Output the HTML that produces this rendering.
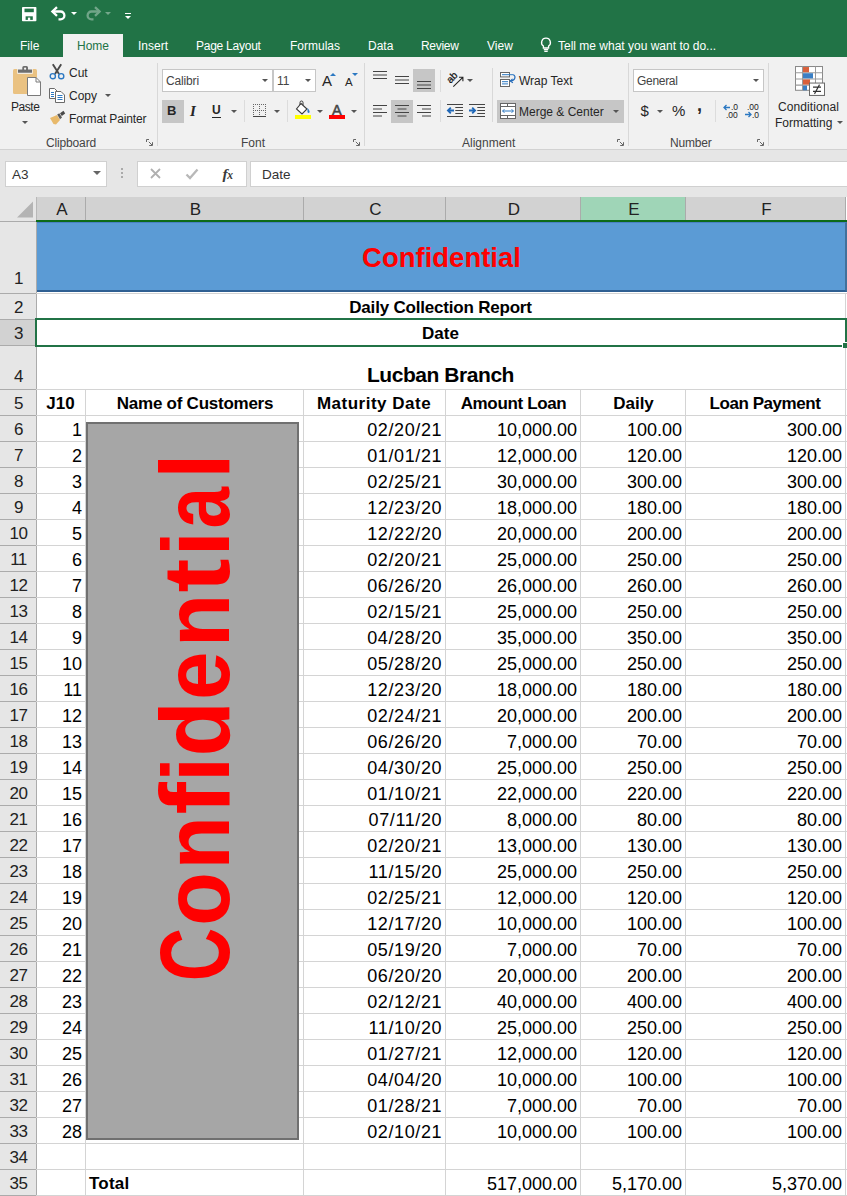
<!DOCTYPE html>
<html><head><meta charset="utf-8"><title>Excel</title>
<style>
*{box-sizing:border-box;margin:0;padding:0}
html,body{width:847px;height:1196px;overflow:hidden;background:#fff;font-family:"Liberation Sans",sans-serif;color:#000}
body{position:relative}
#top{position:absolute;left:0;top:0;width:847px;height:197px;background:#e6e6e6}
#green{position:absolute;left:0;top:0;width:847px;height:57px;background:#217346}
#ribbon{position:absolute;left:0;top:57px;width:847px;height:93px;background:#f1f1f1;border-bottom:1px solid #d2d2d2}
.tab{position:absolute;top:34px;height:23px;line-height:25px;font-size:12px;color:#fff;white-space:nowrap}
.tab.home{background:#f1f1f1;color:#217346;left:63px;width:60px;text-align:center}
.rl{position:absolute;font-size:12px;color:#262626;white-space:nowrap;line-height:14px}
.gl{position:absolute;font-size:12px;color:#444;white-space:nowrap;line-height:14px;top:79px}
.sep{position:absolute;top:6px;width:1px;height:83px;background:#d8d8d8}
.dd{position:absolute;background:#fff;border:1px solid #c6c6c6;height:23px;font-size:12px;line-height:22px;padding-left:3px;color:#444;letter-spacing:-0.15px}
.arr{position:absolute;width:0;height:0;border-left:3px solid transparent;border-right:3px solid transparent;border-top:3px solid #555}
#fbar .box{position:absolute;top:161px;height:26px;background:#fff;border:1px solid #d0d0d0}
#grid{position:absolute;left:0;top:0;width:847px;height:1196px}
.corner{position:absolute;left:0;top:197px;width:37px;height:24px;background:#e6e6e6;border-right:1px solid #b8b8b8}
.ch{position:absolute;top:197px;height:23px;background:#d2d2d2;border-right:1px solid #ababab;text-align:center;font-size:17px;line-height:25px;color:#222;padding-left:2px}
.ch.hov{background:#9fd5b7}
.chline{position:absolute;left:36px;top:220px;width:811px;height:2px;background:#0d6a18}
.rh{position:absolute;left:0;width:37px;background:#e6e6e6;border-bottom:1px solid #ababab;border-right:1px solid #ababab;text-align:center;font-size:17px;color:#222}
.rh span{position:absolute;left:0;width:36px;bottom:0px;line-height:22px;letter-spacing:-0.5px;padding-left:1px}
.rh.sel{background:#d2d2d2}
.hl{position:absolute;left:36px;width:811px;height:1px;background:#d4d4d4}
.vl{position:absolute;width:1px;background:#d4d4d4}
.blue{position:absolute;left:37px;top:222px;width:810px;height:70px;background:#5b9bd5;border-bottom:2px solid #2f5f92;border-right:2px solid #41719c;border-top:1px solid #4b80c4;text-align:center}
.blue span{position:absolute;left:-1px;width:811px;top:17.5px;font-size:27.5px;letter-spacing:0px;font-weight:bold;color:#ff0000;line-height:34px}
.t{position:absolute;height:26px;line-height:31px;font-size:18px;white-space:nowrap;color:#000}
.t.r{text-align:right;padding-right:3px}
.t.b{font-weight:bold;font-size:17px;line-height:29px}
.t.ctr{text-align:center}
.t.big{font-size:21px;line-height:57px;letter-spacing:-0.45px}
.selbox{position:absolute;left:35px;top:318px;width:812px;height:29px;border:2px solid #217346;background:#fff}
.selh{position:absolute;left:842px;top:342px;width:5px;height:6px;background:#217346;border-top:1px solid #fff;border-left:1px solid #fff}
.gbox{position:absolute;left:86px;top:422px;width:213px;height:718px;background:#a6a6a6;border:2px solid #707070}
.vt{position:absolute;left:0;top:0;transform-origin:0 0;transform:translate(145.5px,982.5px) rotate(-90deg) scaleX(0.925);font-size:99px;font-weight:bold;color:#ff0000;line-height:99px;white-space:nowrap}
.ic{position:absolute;display:block;overflow:visible}
.arr.w{border-top-color:#fff}
.arr.up{border-top:none;border-bottom:3.5px solid #2b78c2;border-left-width:3px;border-right-width:3px}
.arr.dnb{border-top:3.5px solid #2b78c2;border-left-width:3px;border-right-width:3px}
.msep{position:absolute;width:1px;height:22px;background:#dcdcdc}
.btnsel{position:absolute;background:#c6c6c6}
.t.d{letter-spacing:0.6px;padding-right:2.9px}

</style></head>
<body>
<div id="top">
<div id="green"></div>
<!-- quick access toolbar -->
<svg class="ic" style="left:21.6px;top:6.6px" width="15" height="15" viewBox="0 0 15 15"><rect x="0" y="0" width="14.4" height="14.2" rx="0.8" fill="#fff"/><rect x="2.5" y="1.6" width="9.3" height="3.6" fill="#217346"/><rect x="3.6" y="9.3" width="7.2" height="3.6" fill="#217346"/><rect x="5.9" y="10.6" width="2.3" height="2.4" fill="#fff"/></svg>
<svg class="ic" style="left:50px;top:5px" width="17" height="16" viewBox="0 0 17 16"><path d="M2 6.5 H10.5 A3.9 3.9 0 0 1 10.5 14.3 H8.5" fill="none" stroke="#fff" stroke-width="2.3"/><path d="M7 2.2 L2.4 6.5 L7 10.8" fill="none" stroke="#fff" stroke-width="2.3"/></svg>
<div class="arr w" style="left:70.5px;top:12px"></div>
<svg class="ic" style="left:85px;top:5px;opacity:.36" width="17" height="16" viewBox="0 0 17 16"><path d="M15 6.5 H6.5 A3.9 3.9 0 0 0 6.5 14.3 H8.5" fill="none" stroke="#fff" stroke-width="2.3"/><path d="M10 2.2 L14.6 6.5 L10 10.8" fill="none" stroke="#fff" stroke-width="2.3"/></svg>
<div class="arr w" style="left:105px;top:12px;opacity:.38"></div>
<div style="position:absolute;left:125px;top:13px;width:6px;height:1px;background:#fff"></div>
<div class="arr w" style="left:125px;top:15.5px;border-left-width:3px;border-right-width:3px;border-top-width:3.5px"></div>
<!-- tabs -->
<div class="tab" style="left:20px">File</div>
<div class="tab home">Home</div>
<div class="tab" style="left:138px">Insert</div>
<div class="tab" style="left:196px;letter-spacing:-0.25px">Page Layout</div>
<div class="tab" style="left:290px">Formulas</div>
<div class="tab" style="left:368px">Data</div>
<div class="tab" style="left:421px;letter-spacing:-0.3px">Review</div>
<div class="tab" style="left:487px">View</div>
<svg class="ic" style="left:540px;top:37px" width="12" height="16" viewBox="0 0 12 16"><path d="M6 1.2 A4.3 4.3 0 0 1 8.6 9 V11 H3.4 V9 A4.3 4.3 0 0 1 6 1.2 Z" fill="none" stroke="#fff" stroke-width="1.35"/><path d="M3.8 12.7 H8.2 M4.3 14.4 H7.7" stroke="#fff" stroke-width="1.3"/></svg>
<div class="tab" style="left:558px">Tell me what you want to do...</div>
<div id="ribbon">
<!-- separators -->
<div class="sep" style="left:157px"></div>
<div class="sep" style="left:364px"></div>
<div class="sep" style="left:628px"></div>
<div class="sep" style="left:768px"></div>
<div class="sep" style="left:492px;top:11px;height:54px"></div>
<div class="msep" style="left:244px;top:43px"></div>
<div class="msep" style="left:287px;top:43px"></div>
<div class="msep" style="left:440px;top:13px"></div>
<div class="msep" style="left:440px;top:43px"></div>
<div class="msep" style="left:715px;top:43px"></div>
<!-- Clipboard -->
<svg class="ic" style="left:12px;top:8px" width="30" height="31" viewBox="0 0 30 31"><rect x="1" y="4" width="24" height="25" rx="1.5" fill="#eac282"/><rect x="5.3" y="3.6" width="15.4" height="5.2" fill="#f6f6f6"/><path d="M6 4.6 H10.3 V2.6 A1.5 1.5 0 0 1 11.8 1.1 H14.5 A1.5 1.5 0 0 1 16 2.6 V4.6 H20 V7.7 H6 Z" fill="#6e6e6e"/><circle cx="13.1" cy="3.7" r="1.1" fill="#f6f6f6"/><path d="M15.5 12.5 H24 L28.5 17 V30.5 H15.5 Z" fill="#fff" stroke="#7a7a7a" stroke-width="1"/><path d="M24 12.5 V17 H28.5" fill="none" stroke="#7a7a7a" stroke-width="1"/></svg>
<div class="rl" style="left:11px;top:43px;letter-spacing:-0.45px">Paste</div>
<div class="arr" style="left:22px;top:64px"></div>
<svg class="ic" style="left:49px;top:7px" width="16" height="16" viewBox="0 0 16 16"><path d="M3.8 0.3 L10 10 M12.2 0.3 L6 10" stroke="#4a4a4a" stroke-width="1.9" fill="none"/><circle cx="3.8" cy="12.2" r="2.6" fill="none" stroke="#2b78c2" stroke-width="1.4"/><circle cx="12.2" cy="12.2" r="2.6" fill="none" stroke="#2b78c2" stroke-width="1.4"/></svg>
<div class="rl" style="left:69px;top:9px">Cut</div>
<svg class="ic" style="left:49px;top:31px" width="16" height="15" viewBox="0 0 16 15"><path d="M0.5 0.5 H5.5 L8.5 3.5 V10.5 H0.5 Z" fill="#fff" stroke="#6a6a6a"/><path d="M2 4.5 H5 M2 6.5 H5 M2 8.5 H5" stroke="#2b78c2" stroke-width="1"/><path d="M6.5 3.5 H12 L15.5 7 V14.5 H6.5 Z" fill="#fff" stroke="#6a6a6a"/><path d="M8.5 7.5 H13.5 M8.5 9.5 H13.5 M8.5 11.5 H13.5" stroke="#2b78c2" stroke-width="1"/></svg>
<div class="rl" style="left:69px;top:32px">Copy</div>
<div class="arr" style="left:105px;top:37px"></div>
<svg class="ic" style="left:49px;top:53px" width="17" height="15" viewBox="0 0 17 15"><path d="M1 8 L8 5 L11 10 L7 14.5 L4.5 14 Z" fill="#e8b96a"/><path d="M8.2 4.6 L10.3 3.2 L13 7.6 L11 9.2 Z" fill="#5a5a5a"/><path d="M11 3.2 L14.5 0.8 L16.2 3.5 L12.8 6 Z" fill="#4a4a4a"/></svg>
<div class="rl" style="left:69px;top:55px;letter-spacing:-0.15px">Format Painter</div>
<div class="gl" style="left:46px;letter-spacing:-0.15px">Clipboard</div>
<svg class="ic lch" style="left:146px;top:82px" width="7" height="7" viewBox="0 0 7 7"><path d="M0.5 3 V0.5 H3 M2.8 2.8 L6 6 M6.5 3.2 V6.5 H3.2" fill="none" stroke="#666" stroke-width="1"/></svg>
<!-- Font -->
<div class="dd" style="left:162px;top:12px;width:111px">Calibri</div>
<div class="arr" style="left:262px;top:22px"></div>
<div class="dd" style="left:273px;top:12px;width:43px">11</div>
<div class="arr" style="left:305px;top:22px"></div>
<div class="rl" style="left:322px;top:16px;font-size:15px;line-height:15px">A</div>
<div class="arr up" style="left:329.5px;top:15.5px"></div>
<div class="rl" style="left:345px;top:19px;font-size:11.5px;line-height:12px">A</div>
<div class="arr dnb" style="left:351.5px;top:15.5px"></div>
<div class="btnsel" style="left:162px;top:43px;width:22px;height:23px"></div>
<div class="rl" style="left:167px;top:47px;font-weight:bold;font-size:13px">B</div>
<div class="rl" style="left:190px;top:47px;font-style:italic;font-size:15px;font-family:'Liberation Serif',serif;font-weight:bold">I</div>
<div class="rl" style="left:212px;top:47px;font-weight:bold;font-size:12px;border-bottom:1px solid #262626;line-height:13px">U</div>
<div class="arr" style="left:231px;top:53px"></div>
<svg class="ic" style="left:253px;top:47px" width="14" height="14" viewBox="0 0 14 14"><g fill="#666"><rect x="0" y="0" width="1" height="1"/><rect x="0" y="6" width="1" height="1"/><rect x="2" y="0" width="1" height="1"/><rect x="2" y="6" width="1" height="1"/><rect x="4" y="0" width="1" height="1"/><rect x="4" y="6" width="1" height="1"/><rect x="6" y="0" width="1" height="1"/><rect x="6" y="6" width="1" height="1"/><rect x="8" y="0" width="1" height="1"/><rect x="8" y="6" width="1" height="1"/><rect x="10" y="0" width="1" height="1"/><rect x="10" y="6" width="1" height="1"/><rect x="12" y="0" width="1" height="1"/><rect x="12" y="6" width="1" height="1"/><rect x="0" y="2" width="1" height="1"/><rect x="6" y="2" width="1" height="1"/><rect x="12" y="2" width="1" height="1"/><rect x="0" y="4" width="1" height="1"/><rect x="6" y="4" width="1" height="1"/><rect x="12" y="4" width="1" height="1"/><rect x="0" y="8" width="1" height="1"/><rect x="6" y="8" width="1" height="1"/><rect x="12" y="8" width="1" height="1"/><rect x="0" y="10" width="1" height="1"/><rect x="6" y="10" width="1" height="1"/><rect x="12" y="10" width="1" height="1"/></g><rect x="0" y="12" width="13" height="1" fill="#444"/></svg>
<div class="arr" style="left:274px;top:53px"></div>
<svg class="ic" style="left:295px;top:44px" width="17" height="14" viewBox="0 0 17 14"><path d="M6 2.5 L12 8 L7 13 L1.5 8 Z" fill="#fff" stroke="#3a3a3a" stroke-width="1.1"/><path d="M5 4 V1.5 A1.5 1.5 0 0 1 8 1.5 V4" fill="none" stroke="#3a3a3a" stroke-width="1"/><path d="M12.5 7 C14 9 15 10 14.5 11.5 C13.5 12.5 12 11.5 12.5 10 Z" fill="#2b78c2"/></svg>
<div style="position:absolute;left:295px;top:58px;width:16px;height:4px;background:#ffff00"></div>
<div class="arr" style="left:317px;top:53px"></div>
<div class="rl" style="left:332px;top:45px;font-size:14.5px;line-height:16px;color:#444;-webkit-text-stroke:0.5px #444">A</div>
<div style="position:absolute;left:329px;top:58px;width:16px;height:4px;background:#ff0000"></div>
<div class="arr" style="left:351px;top:53px"></div>
<div class="gl" style="left:241px">Font</div>
<svg class="ic lch" style="left:353px;top:82px" width="7" height="7" viewBox="0 0 7 7"><path d="M0.5 3 V0.5 H3 M2.8 2.8 L6 6 M6.5 3.2 V6.5 H3.2" fill="none" stroke="#666" stroke-width="1"/></svg>
<!-- Alignment -->
<div class="btnsel" style="left:413px;top:12px;width:22px;height:23px"></div>
<div class="btnsel" style="left:391px;top:43px;width:22px;height:23px"></div>
<div class="btnsel" style="left:497px;top:43px;width:127px;height:23px"></div>
<svg class="ic" style="left:373px;top:14px" width="14" height="9" viewBox="0 0 14 9"><path d="M0 0.5 H14 M0 4 H14 M0 7.5 H14" stroke="#444" stroke-width="1"/></svg>
<svg class="ic" style="left:395px;top:19px" width="14" height="9" viewBox="0 0 14 9"><path d="M0 0.5 H14 M0 4 H14 M0 7.5 H14" stroke="#444" stroke-width="1"/></svg>
<svg class="ic" style="left:417px;top:24px" width="14" height="9" viewBox="0 0 14 9"><path d="M0 0.5 H14 M0 4 H14 M0 7.5 H14" stroke="#444" stroke-width="1"/></svg>
<svg class="ic" style="left:373px;top:48px" width="14" height="12" viewBox="0 0 14 12"><path d="M0 0.5 H14 M0 4 H9 M0 7.5 H14 M0 11 H9" stroke="#444" stroke-width="1"/></svg>
<svg class="ic" style="left:395px;top:48px" width="14" height="12" viewBox="0 0 14 12"><path d="M0 0.5 H14 M2.5 4 H11.5 M0 7.5 H14 M2.5 11 H11.5" stroke="#444" stroke-width="1"/></svg>
<svg class="ic" style="left:417px;top:48px" width="14" height="12" viewBox="0 0 14 12"><path d="M0 0.5 H14 M5 4 H14 M0 7.5 H14 M5 11 H14" stroke="#444" stroke-width="1"/></svg>
<svg class="ic" style="left:447px;top:15px" width="17" height="16" viewBox="0 0 17 16"><text x="5.2" y="5.6" text-anchor="middle" font-size="10" font-family="Liberation Sans" fill="#111" stroke="#111" stroke-width="0.25" transform="rotate(-45 5.2 5.6)" dy="3">ab</text><path d="M6.3 14.6 L15.6 5.6 M12 5.3 H15.9 V9.2" fill="none" stroke="#222" stroke-width="1.1"/></svg>
<div class="arr" style="left:467px;top:22px"></div>
<svg class="ic" style="left:447px;top:47px" width="17" height="13" viewBox="0 0 17 13"><path d="M0 0.5 H16 M8.3 3.5 H16 M8.3 6.5 H16 M8.3 9.5 H16 M0 12.5 H16" stroke="#444" stroke-width="1"/><path d="M0.8 6.5 H7 M3.8 3.6 L0.9 6.5 L3.8 9.4" fill="none" stroke="#2068b8" stroke-width="1.8"/></svg>
<svg class="ic" style="left:469px;top:47px" width="17" height="13" viewBox="0 0 17 13"><path d="M0 0.5 H16 M8.3 3.5 H16 M8.3 6.5 H16 M8.3 9.5 H16 M0 12.5 H16" stroke="#444" stroke-width="1"/><path d="M0 6.5 H6.2 M3.2 3.6 L6.1 6.5 L3.2 9.4" fill="none" stroke="#2068b8" stroke-width="1.8"/></svg>
<svg class="ic" style="left:500px;top:14px" width="17" height="17" viewBox="0 0 17 17"><rect x="0.5" y="1.5" width="9" height="4.4" fill="#fff" stroke="#666"/><rect x="0.5" y="8.5" width="9" height="7" fill="#fff" stroke="#666"/><path d="M2 3.7 H13.6 M2 10.7 H8 M2 12.9 H8" stroke="#2b78c2" stroke-width="1"/><path d="M13.5 3.7 C16.3 5.5 15 9.8 10.4 10" fill="none" stroke="#2068b8" stroke-width="1.1"/><path d="M12.6 7.9 L10.2 10 L12.9 11.9" fill="none" stroke="#2068b8" stroke-width="1.1"/></svg>
<div class="rl" style="left:519px;top:17px">Wrap Text</div>
<svg class="ic" style="left:500px;top:46px" width="16" height="16" viewBox="0 0 16 16"><rect x="0.5" y="0.5" width="15" height="15" fill="#fff" stroke="#666"/><path d="M0.5 3.5 H15.5 M0.5 12.5 H15.5 M7.5 0.5 V3.5 M7.5 12.5 V15.5" stroke="#666" fill="none"/><path d="M2.6 8 H13.4 M4.4 6.2 L2.6 8 L4.4 9.8 M11.6 6.2 L13.4 8 L11.6 9.8" fill="none" stroke="#2b78c2" stroke-width="1"/></svg>
<div class="rl" style="left:519px;top:48px">Merge &amp; Center</div>
<div class="arr" style="left:613px;top:53px"></div>
<div class="gl" style="left:462px">Alignment</div>
<svg class="ic lch" style="left:617px;top:82px" width="7" height="7" viewBox="0 0 7 7"><path d="M0.5 3 V0.5 H3 M2.8 2.8 L6 6 M6.5 3.2 V6.5 H3.2" fill="none" stroke="#666" stroke-width="1"/></svg>
<!-- Number -->
<div class="dd" style="left:633px;top:12px;width:131px;letter-spacing:-0.3px">General</div>
<div class="arr" style="left:753px;top:22px"></div>
<div class="rl" style="left:640.5px;top:45px;font-size:15px;line-height:18px">$</div>
<div class="arr" style="left:657px;top:53px"></div>
<div class="rl" style="left:672px;top:45px;font-size:15px;line-height:18px">%</div>
<div class="rl" style="left:697px;top:39px;font-size:18px;line-height:18px;font-weight:bold">,</div>
<svg class="ic" style="left:723px;top:47px" width="16" height="14" viewBox="0 0 16 14"><path d="M1 3.5 H7 M3.5 1 L1 3.5 L3.5 6" fill="none" stroke="#2b78c2" stroke-width="1.3"/><text x="8" y="6" font-size="8.5" font-family="Liberation Sans" fill="#222">.0</text><text x="3" y="13.5" font-size="8.5" font-family="Liberation Sans" fill="#222">.00</text></svg>
<svg class="ic" style="left:744px;top:47px" width="16" height="14" viewBox="0 0 16 14"><text x="3" y="6" font-size="8.5" font-family="Liberation Sans" fill="#222">.00</text><path d="M1 10.5 H7 M4.5 8 L7 10.5 L4.5 13" fill="none" stroke="#2b78c2" stroke-width="1.3"/><text x="8" y="13.5" font-size="8.5" font-family="Liberation Sans" fill="#222">.0</text></svg>
<div class="gl" style="left:670px;letter-spacing:-0.2px">Number</div>
<svg class="ic lch" style="left:757px;top:82px" width="7" height="7" viewBox="0 0 7 7"><path d="M0.5 3 V0.5 H3 M2.8 2.8 L6 6 M6.5 3.2 V6.5 H3.2" fill="none" stroke="#666" stroke-width="1"/></svg>
<!-- Conditional Formatting -->
<svg class="ic" style="left:795px;top:9px" width="31" height="31" viewBox="0 0 31 30" preserveAspectRatio="none"><rect x="0.5" y="0.5" width="27" height="23" fill="#fff" stroke="#8a8a8a"/><path d="M0.5 6.5 H27.5 M0.5 12.5 H27.5 M0.5 18.5 H27.5 M7.5 0.5 V23.5 M20.5 0.5 V23.5" stroke="#9a9a9a" fill="none"/><rect x="8" y="1" width="6" height="5" fill="#d9603b"/><rect x="8" y="7" width="10" height="5" fill="#3b7fc4"/><rect x="8" y="13" width="7" height="5" fill="#d9603b"/><rect x="8" y="19" width="4" height="4.5" fill="#3b7fc4"/><rect x="14.5" y="16.5" width="15" height="12" fill="#fff" stroke="#6a6a6a"/><path d="M18 20.5 H26 M18 24.5 H26 M24.5 18 L19.5 27" stroke="#333" stroke-width="1.1" fill="none"/></svg>
<div class="rl" style="left:778px;top:43px;letter-spacing:0.1px">Conditional</div>
<div class="rl" style="left:775px;top:59px">Formatting</div>
<div class="arr" style="left:837px;top:64px"></div>
</div>
<!-- formula bar -->
<div id="fbar">
<div class="box" style="left:5px;width:102px"><span style="position:absolute;left:6px;top:0;line-height:26px;font-size:13.5px;color:#333">A3</span></div>
<div class="arr" style="left:93px;top:171px;border-top-color:#666;border-left-width:4px;border-right-width:4px;border-top-width:4px"></div>
<div style="position:absolute;left:121px;top:168px;width:2px;height:2px;background:#aaa;box-shadow:0 4px 0 #aaa,0 8px 0 #aaa"></div>
<div class="box" style="left:137px;width:110px"></div>
<svg class="ic" style="left:150px;top:168px" width="11" height="11" viewBox="0 0 11 11"><path d="M1 1 L10 10 M10 1 L1 10" stroke="#b0b0b0" stroke-width="1.8"/></svg>
<svg class="ic" style="left:185px;top:168px" width="14" height="11" viewBox="0 0 14 11"><path d="M1.5 6.5 L5 10 L12.5 1.5" fill="none" stroke="#b8b8b8" stroke-width="2.3"/></svg>
<div style="position:absolute;left:222.5px;top:164.5px;font-family:'Liberation Serif',serif;font-style:italic;font-weight:bold;font-size:15.5px;color:#3a3a3a;line-height:18px">f<span style="font-size:11.5px;margin-left:-0.5px">x</span></div>
<div class="box" style="left:250px;width:600px"><span style="position:absolute;left:11px;top:0;line-height:26px;font-size:13.5px;color:#333">Date</span></div>
</div>
</div>
<div id="grid">
<div class="corner"><svg width="36" height="24" viewBox="0 0 36 24"><path d="M33 4.5 L33 20.5 L17 20.5 Z" fill="#b4b4b4"/></svg></div>
<div class="ch" style="left:37px;width:49px"><span>A</span></div>
<div class="ch" style="left:86px;width:218px"><span>B</span></div>
<div class="ch" style="left:304px;width:142px"><span>C</span></div>
<div class="ch" style="left:446px;width:135px"><span>D</span></div>
<div class="ch hov" style="left:581px;width:105px"><span>E</span></div>
<div class="ch" style="left:686px;width:160px"><span>F</span></div>
<div class="chline"></div><div style="position:absolute;left:0;top:221px;width:36px;height:1px;background:#ababab"></div>
<div class="rh" style="top:222px;height:72px"><span style="bottom:3.5px">1</span></div>
<div class="rh" style="top:294px;height:26px"><span>2</span></div>
<div class="rh sel" style="top:320px;height:26px"><span>3</span></div>
<div class="rh" style="top:346px;height:44px"><span style="bottom:1.5px">4</span></div>
<div class="rh" style="top:390px;height:26px"><span>5</span></div>
<div class="rh" style="top:416px;height:26px"><span>6</span></div>
<div class="rh" style="top:442px;height:26px"><span>7</span></div>
<div class="rh" style="top:468px;height:26px"><span>8</span></div>
<div class="rh" style="top:494px;height:26px"><span>9</span></div>
<div class="rh" style="top:520px;height:26px"><span>10</span></div>
<div class="rh" style="top:546px;height:26px"><span>11</span></div>
<div class="rh" style="top:572px;height:26px"><span>12</span></div>
<div class="rh" style="top:598px;height:26px"><span>13</span></div>
<div class="rh" style="top:624px;height:26px"><span>14</span></div>
<div class="rh" style="top:650px;height:26px"><span>15</span></div>
<div class="rh" style="top:676px;height:26px"><span>16</span></div>
<div class="rh" style="top:702px;height:26px"><span>17</span></div>
<div class="rh" style="top:728px;height:26px"><span>18</span></div>
<div class="rh" style="top:754px;height:26px"><span>19</span></div>
<div class="rh" style="top:780px;height:26px"><span>20</span></div>
<div class="rh" style="top:806px;height:26px"><span>21</span></div>
<div class="rh" style="top:832px;height:26px"><span>22</span></div>
<div class="rh" style="top:858px;height:26px"><span>23</span></div>
<div class="rh" style="top:884px;height:26px"><span>24</span></div>
<div class="rh" style="top:910px;height:26px"><span>25</span></div>
<div class="rh" style="top:936px;height:26px"><span>26</span></div>
<div class="rh" style="top:962px;height:26px"><span>27</span></div>
<div class="rh" style="top:988px;height:26px"><span>28</span></div>
<div class="rh" style="top:1014px;height:26px"><span>29</span></div>
<div class="rh" style="top:1040px;height:26px"><span>30</span></div>
<div class="rh" style="top:1066px;height:26px"><span>31</span></div>
<div class="rh" style="top:1092px;height:26px"><span>32</span></div>
<div class="rh" style="top:1118px;height:26px"><span>33</span></div>
<div class="rh" style="top:1144px;height:26px"><span>34</span></div>
<div class="rh" style="top:1170px;height:26px"><span>35</span></div>
<div class="hl" style="top:293px"></div>
<div class="hl" style="top:389px"></div>
<div class="hl" style="top:415px"></div>
<div class="hl" style="top:441px"></div>
<div class="hl" style="top:467px"></div>
<div class="hl" style="top:493px"></div>
<div class="hl" style="top:519px"></div>
<div class="hl" style="top:545px"></div>
<div class="hl" style="top:571px"></div>
<div class="hl" style="top:597px"></div>
<div class="hl" style="top:623px"></div>
<div class="hl" style="top:649px"></div>
<div class="hl" style="top:675px"></div>
<div class="hl" style="top:701px"></div>
<div class="hl" style="top:727px"></div>
<div class="hl" style="top:753px"></div>
<div class="hl" style="top:779px"></div>
<div class="hl" style="top:805px"></div>
<div class="hl" style="top:831px"></div>
<div class="hl" style="top:857px"></div>
<div class="hl" style="top:883px"></div>
<div class="hl" style="top:909px"></div>
<div class="hl" style="top:935px"></div>
<div class="hl" style="top:961px"></div>
<div class="hl" style="top:987px"></div>
<div class="hl" style="top:1013px"></div>
<div class="hl" style="top:1039px"></div>
<div class="hl" style="top:1065px"></div>
<div class="hl" style="top:1091px"></div>
<div class="hl" style="top:1117px"></div>
<div class="hl" style="top:1143px"></div>
<div class="hl" style="top:1169px"></div>
<div class="hl" style="top:1195px"></div>
<div class="vl" style="left:85px;top:389px;height:807px"></div>
<div class="vl" style="left:303px;top:389px;height:807px"></div>
<div class="vl" style="left:445px;top:389px;height:807px"></div>
<div class="vl" style="left:580px;top:389px;height:807px"></div>
<div class="vl" style="left:685px;top:389px;height:807px"></div>
<div class="vl" style="left:845px;top:389px;height:807px"></div>
<div class="vl" style="left:845px;top:293px;height:96px"></div>
<div class="blue"><span>Confidential</span></div>
<div class="t b ctr" style="top:293px;height:26px;left:36px;width:809px;letter-spacing:-0.2px">Daily Collection Report</div>
<div class="selbox"></div><div class="selh"></div>
<div class="t b ctr" style="top:319px;height:26px;left:36px;width:809px">Date</div>
<div class="t b ctr big" style="top:346px;height:43px;left:36px;width:809px">Lucban Branch</div>
<div class="t b ctr" style="top:389px;left:36px;width:49px;letter-spacing:0px">J10</div>
<div class="t b ctr" style="top:389px;left:86px;width:218px;letter-spacing:-0.25px">Name of Customers</div>
<div class="t b ctr" style="top:389px;left:303px;width:142px;letter-spacing:0.5px">Maturity Date</div>
<div class="t b ctr" style="top:389px;left:446px;width:135px;letter-spacing:-0.35px">Amount Loan</div>
<div class="t b ctr" style="top:389px;left:581px;width:105px;letter-spacing:0px">Daily</div>
<div class="t b ctr" style="top:389px;left:685px;width:160px;letter-spacing:-0.45px">Loan Payment</div>
<div class="t r" style="top:415px;left:36px;width:49px">1</div><div class="t r d" style="top:415px;left:303px;width:142px">02/20/21</div><div class="t r" style="top:415px;left:445px;width:135px">10,000.00</div><div class="t r" style="top:415px;left:580px;width:105px">100.00</div><div class="t r" style="top:415px;left:685px;width:160px">300.00</div>
<div class="t r" style="top:441px;left:36px;width:49px">2</div><div class="t r d" style="top:441px;left:303px;width:142px">01/01/21</div><div class="t r" style="top:441px;left:445px;width:135px">12,000.00</div><div class="t r" style="top:441px;left:580px;width:105px">120.00</div><div class="t r" style="top:441px;left:685px;width:160px">120.00</div>
<div class="t r" style="top:467px;left:36px;width:49px">3</div><div class="t r d" style="top:467px;left:303px;width:142px">02/25/21</div><div class="t r" style="top:467px;left:445px;width:135px">30,000.00</div><div class="t r" style="top:467px;left:580px;width:105px">300.00</div><div class="t r" style="top:467px;left:685px;width:160px">300.00</div>
<div class="t r" style="top:493px;left:36px;width:49px">4</div><div class="t r d" style="top:493px;left:303px;width:142px">12/23/20</div><div class="t r" style="top:493px;left:445px;width:135px">18,000.00</div><div class="t r" style="top:493px;left:580px;width:105px">180.00</div><div class="t r" style="top:493px;left:685px;width:160px">180.00</div>
<div class="t r" style="top:519px;left:36px;width:49px">5</div><div class="t r d" style="top:519px;left:303px;width:142px">12/22/20</div><div class="t r" style="top:519px;left:445px;width:135px">20,000.00</div><div class="t r" style="top:519px;left:580px;width:105px">200.00</div><div class="t r" style="top:519px;left:685px;width:160px">200.00</div>
<div class="t r" style="top:545px;left:36px;width:49px">6</div><div class="t r d" style="top:545px;left:303px;width:142px">02/20/21</div><div class="t r" style="top:545px;left:445px;width:135px">25,000.00</div><div class="t r" style="top:545px;left:580px;width:105px">250.00</div><div class="t r" style="top:545px;left:685px;width:160px">250.00</div>
<div class="t r" style="top:571px;left:36px;width:49px">7</div><div class="t r d" style="top:571px;left:303px;width:142px">06/26/20</div><div class="t r" style="top:571px;left:445px;width:135px">26,000.00</div><div class="t r" style="top:571px;left:580px;width:105px">260.00</div><div class="t r" style="top:571px;left:685px;width:160px">260.00</div>
<div class="t r" style="top:597px;left:36px;width:49px">8</div><div class="t r d" style="top:597px;left:303px;width:142px">02/15/21</div><div class="t r" style="top:597px;left:445px;width:135px">25,000.00</div><div class="t r" style="top:597px;left:580px;width:105px">250.00</div><div class="t r" style="top:597px;left:685px;width:160px">250.00</div>
<div class="t r" style="top:623px;left:36px;width:49px">9</div><div class="t r d" style="top:623px;left:303px;width:142px">04/28/20</div><div class="t r" style="top:623px;left:445px;width:135px">35,000.00</div><div class="t r" style="top:623px;left:580px;width:105px">350.00</div><div class="t r" style="top:623px;left:685px;width:160px">350.00</div>
<div class="t r" style="top:649px;left:36px;width:49px">10</div><div class="t r d" style="top:649px;left:303px;width:142px">05/28/20</div><div class="t r" style="top:649px;left:445px;width:135px">25,000.00</div><div class="t r" style="top:649px;left:580px;width:105px">250.00</div><div class="t r" style="top:649px;left:685px;width:160px">250.00</div>
<div class="t r" style="top:675px;left:36px;width:49px">11</div><div class="t r d" style="top:675px;left:303px;width:142px">12/23/20</div><div class="t r" style="top:675px;left:445px;width:135px">18,000.00</div><div class="t r" style="top:675px;left:580px;width:105px">180.00</div><div class="t r" style="top:675px;left:685px;width:160px">180.00</div>
<div class="t r" style="top:701px;left:36px;width:49px">12</div><div class="t r d" style="top:701px;left:303px;width:142px">02/24/21</div><div class="t r" style="top:701px;left:445px;width:135px">20,000.00</div><div class="t r" style="top:701px;left:580px;width:105px">200.00</div><div class="t r" style="top:701px;left:685px;width:160px">200.00</div>
<div class="t r" style="top:727px;left:36px;width:49px">13</div><div class="t r d" style="top:727px;left:303px;width:142px">06/26/20</div><div class="t r" style="top:727px;left:445px;width:135px">7,000.00</div><div class="t r" style="top:727px;left:580px;width:105px">70.00</div><div class="t r" style="top:727px;left:685px;width:160px">70.00</div>
<div class="t r" style="top:753px;left:36px;width:49px">14</div><div class="t r d" style="top:753px;left:303px;width:142px">04/30/20</div><div class="t r" style="top:753px;left:445px;width:135px">25,000.00</div><div class="t r" style="top:753px;left:580px;width:105px">250.00</div><div class="t r" style="top:753px;left:685px;width:160px">250.00</div>
<div class="t r" style="top:779px;left:36px;width:49px">15</div><div class="t r d" style="top:779px;left:303px;width:142px">01/10/21</div><div class="t r" style="top:779px;left:445px;width:135px">22,000.00</div><div class="t r" style="top:779px;left:580px;width:105px">220.00</div><div class="t r" style="top:779px;left:685px;width:160px">220.00</div>
<div class="t r" style="top:805px;left:36px;width:49px">16</div><div class="t r d" style="top:805px;left:303px;width:142px">07/11/20</div><div class="t r" style="top:805px;left:445px;width:135px">8,000.00</div><div class="t r" style="top:805px;left:580px;width:105px">80.00</div><div class="t r" style="top:805px;left:685px;width:160px">80.00</div>
<div class="t r" style="top:831px;left:36px;width:49px">17</div><div class="t r d" style="top:831px;left:303px;width:142px">02/20/21</div><div class="t r" style="top:831px;left:445px;width:135px">13,000.00</div><div class="t r" style="top:831px;left:580px;width:105px">130.00</div><div class="t r" style="top:831px;left:685px;width:160px">130.00</div>
<div class="t r" style="top:857px;left:36px;width:49px">18</div><div class="t r d" style="top:857px;left:303px;width:142px">11/15/20</div><div class="t r" style="top:857px;left:445px;width:135px">25,000.00</div><div class="t r" style="top:857px;left:580px;width:105px">250.00</div><div class="t r" style="top:857px;left:685px;width:160px">250.00</div>
<div class="t r" style="top:883px;left:36px;width:49px">19</div><div class="t r d" style="top:883px;left:303px;width:142px">02/25/21</div><div class="t r" style="top:883px;left:445px;width:135px">12,000.00</div><div class="t r" style="top:883px;left:580px;width:105px">120.00</div><div class="t r" style="top:883px;left:685px;width:160px">120.00</div>
<div class="t r" style="top:909px;left:36px;width:49px">20</div><div class="t r d" style="top:909px;left:303px;width:142px">12/17/20</div><div class="t r" style="top:909px;left:445px;width:135px">10,000.00</div><div class="t r" style="top:909px;left:580px;width:105px">100.00</div><div class="t r" style="top:909px;left:685px;width:160px">100.00</div>
<div class="t r" style="top:935px;left:36px;width:49px">21</div><div class="t r d" style="top:935px;left:303px;width:142px">05/19/20</div><div class="t r" style="top:935px;left:445px;width:135px">7,000.00</div><div class="t r" style="top:935px;left:580px;width:105px">70.00</div><div class="t r" style="top:935px;left:685px;width:160px">70.00</div>
<div class="t r" style="top:961px;left:36px;width:49px">22</div><div class="t r d" style="top:961px;left:303px;width:142px">06/20/20</div><div class="t r" style="top:961px;left:445px;width:135px">20,000.00</div><div class="t r" style="top:961px;left:580px;width:105px">200.00</div><div class="t r" style="top:961px;left:685px;width:160px">200.00</div>
<div class="t r" style="top:987px;left:36px;width:49px">23</div><div class="t r d" style="top:987px;left:303px;width:142px">02/12/21</div><div class="t r" style="top:987px;left:445px;width:135px">40,000.00</div><div class="t r" style="top:987px;left:580px;width:105px">400.00</div><div class="t r" style="top:987px;left:685px;width:160px">400.00</div>
<div class="t r" style="top:1013px;left:36px;width:49px">24</div><div class="t r d" style="top:1013px;left:303px;width:142px">11/10/20</div><div class="t r" style="top:1013px;left:445px;width:135px">25,000.00</div><div class="t r" style="top:1013px;left:580px;width:105px">250.00</div><div class="t r" style="top:1013px;left:685px;width:160px">250.00</div>
<div class="t r" style="top:1039px;left:36px;width:49px">25</div><div class="t r d" style="top:1039px;left:303px;width:142px">01/27/21</div><div class="t r" style="top:1039px;left:445px;width:135px">12,000.00</div><div class="t r" style="top:1039px;left:580px;width:105px">120.00</div><div class="t r" style="top:1039px;left:685px;width:160px">120.00</div>
<div class="t r" style="top:1065px;left:36px;width:49px">26</div><div class="t r d" style="top:1065px;left:303px;width:142px">04/04/20</div><div class="t r" style="top:1065px;left:445px;width:135px">10,000.00</div><div class="t r" style="top:1065px;left:580px;width:105px">100.00</div><div class="t r" style="top:1065px;left:685px;width:160px">100.00</div>
<div class="t r" style="top:1091px;left:36px;width:49px">27</div><div class="t r d" style="top:1091px;left:303px;width:142px">01/28/21</div><div class="t r" style="top:1091px;left:445px;width:135px">7,000.00</div><div class="t r" style="top:1091px;left:580px;width:105px">70.00</div><div class="t r" style="top:1091px;left:685px;width:160px">70.00</div>
<div class="t r" style="top:1117px;left:36px;width:49px">28</div><div class="t r d" style="top:1117px;left:303px;width:142px">02/10/21</div><div class="t r" style="top:1117px;left:445px;width:135px">10,000.00</div><div class="t r" style="top:1117px;left:580px;width:105px">100.00</div><div class="t r" style="top:1117px;left:685px;width:160px">100.00</div>
<div class="t b" style="top:1169px;left:85px;width:218px;text-align:left;padding-left:4px;letter-spacing:0.2px">Total</div>
<div class="t r" style="top:1169px;left:445px;width:135px">517,000.00</div><div class="t r" style="top:1169px;left:580px;width:105px">5,170.00</div><div class="t r" style="top:1169px;left:685px;width:160px">5,370.00</div>
<div class="gbox"></div>
<svg class="ic" style="left:0;top:0" width="847" height="1196" viewBox="0 0 847 1196"><g transform="translate(228.6,978.3) rotate(-90)" font-family="Liberation Sans" font-weight="bold" font-size="100" fill="#ff0000"><text transform="translate(-3.0,0) scale(0.741,0.976)">C</text><text transform="translate(52.4,0) scale(0.884,0.954)">o</text><text transform="translate(108.7,0) scale(0.876,0.926)">n</text><text transform="translate(163.8,0) scale(0.970,0.982)">f</text><text transform="translate(196.3,0) scale(0.907,0.952)">i</text><text transform="translate(221.8,0) scale(0.904,0.977)">d</text><text transform="translate(278.3,0) scale(0.870,0.954)">e</text><text transform="translate(331.4,0) scale(0.869,0.926)">n</text><text transform="translate(385.8,0) scale(1.019,0.939)">t</text><text transform="translate(422.1,0) scale(0.907,0.952)">i</text><text transform="translate(449.7,0) scale(0.745,0.954)">a</text><text transform="translate(499.5,0) scale(0.907,0.977)">l</text></g></svg>
</div>
</body></html>
